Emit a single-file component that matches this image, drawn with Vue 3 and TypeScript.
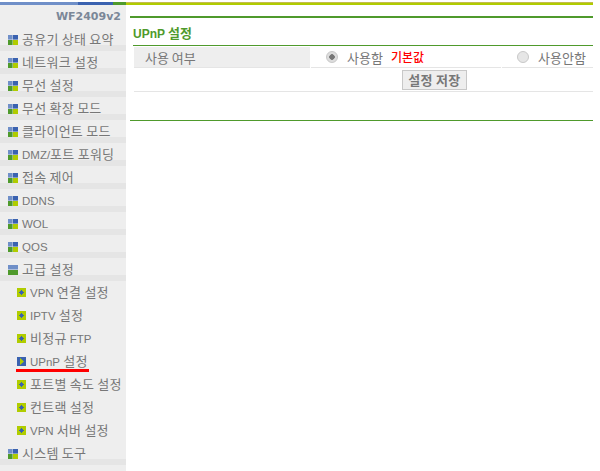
<script setup lang="ts">
interface MenuItem {
  label: string
  kind: 'top' | 'open' | 'sub' | 'active'
}

interface TextRun {
  text: string
  latin: boolean
}

const menu: MenuItem[] = [
  { label: '공유기 상태 요약', kind: 'top' },
  { label: '네트워크 설정', kind: 'top' },
  { label: '무선 설정', kind: 'top' },
  { label: '무선 확장 모드', kind: 'top' },
  { label: '클라이언트 모드', kind: 'top' },
  { label: 'DMZ/포트 포워딩', kind: 'top' },
  { label: '접속 제어', kind: 'top' },
  { label: 'DDNS', kind: 'top' },
  { label: 'WOL', kind: 'top' },
  { label: 'QOS', kind: 'top' },
  { label: '고급 설정', kind: 'open' },
  { label: 'VPN 연결 설정', kind: 'sub' },
  { label: 'IPTV 설정', kind: 'sub' },
  { label: '비정규 FTP', kind: 'sub' },
  { label: 'UPnP 설정', kind: 'active' },
  { label: '포트별 속도 설정', kind: 'sub' },
  { label: '컨트랙 설정', kind: 'sub' },
  { label: 'VPN 서버 설정', kind: 'sub' },
  { label: '시스템 도구', kind: 'top' }
]

function runs(label: string): TextRun[] {
  return label
    .split(/([A-Za-z0-9/]+)/)
    .filter((text) => text.length > 0)
    .map((text) => ({ text, latin: /^[A-Za-z0-9/]+$/.test(text) }))
}
</script>

<template>
  <div class="page">
    <div class="topbar">
      <span class="seg seg-a"></span>
      <span class="seg seg-b"></span>
      <span class="seg seg-c"></span>
      <span class="seg seg-d"></span>
    </div>
    <div class="body">
      <aside class="sidebar">
        <div class="model">WF2409v2</div>
        <ul class="menu">
          <li
            v-for="item in menu"
            :key="item.label"
            class="row"
            :class="item.kind"
          >
            <svg v-if="item.kind === 'top'" class="icon" width="10" height="10" viewBox="0 0 10 10">
              <rect x="0" y="0" width="4.6" height="4.6" fill="#6f8fc8" />
              <rect x="5" y="0" width="5" height="4.6" fill="#3a62b0" />
              <rect x="0" y="5" width="4.6" height="5" fill="#4f9a2c" />
              <rect x="5" y="5" width="5" height="5" fill="#b0cc00" />
            </svg>
            <svg v-else-if="item.kind === 'open'" class="icon" width="10" height="10" viewBox="0 0 10 10">
              <rect x="0" y="0" width="10" height="4.5" fill="#6f8fc8" />
              <rect x="0" y="5" width="10" height="5" fill="#4f9a2c" />
            </svg>
            <svg v-else-if="item.kind === 'sub'" class="icon" width="9" height="9" viewBox="0 0 9 9">
              <rect width="9" height="9" fill="#b0cc00" />
              <path d="M4 2H5V3H6V4H7V5H6V6H5V7H4V6H3V5H2V4H3V3H4Z" fill="#3a62b0" />
            </svg>
            <svg v-else class="icon" width="9" height="9" viewBox="0 0 9 9">
              <rect width="9" height="9" fill="#3a62b0" />
              <path d="M3 1L7 4.5L3 8Z" fill="#b0cc00" />
            </svg>
            <span class="label">
              <span
                v-for="(run, i) in runs(item.label)"
                :key="i"
                :class="{ latin: run.latin }"
              >{{ run.text }}</span>
            </span>
            <span v-if="item.kind === 'active'" class="underline"></span>
          </li>
        </ul>
      </aside>

      <main class="main">
        <h1 class="title"><span class="title-latin">UPnP</span> 설정</h1>
        <div class="form">
          <div class="form-row">
            <div class="cell-label">사용 여부</div>
            <div class="cell-on">
              <span class="radio checked"></span>
              <span class="opt">사용함</span>
              <span class="default">기본값</span>
            </div>
            <div class="cell-off">
              <span class="radio"></span>
              <span class="opt">사용안함</span>
            </div>
          </div>
          <div class="form-actions">
            <button class="save" type="button">설정 저장</button>
          </div>
        </div>
      </main>
    </div>
  </div>
</template>

<style>
html,
body {
  margin: 0;
  background: #ffffff;
}
</style>

<style scoped>
.page {
  width: 600px;
  height: 471px;
  overflow: hidden;
  background: #ffffff;
  font-family: "Noto Sans CJK KR", "DejaVu Sans", sans-serif;
  font-size: 13px;
  color: #777777;
}

.topbar {
  display: flex;
  width: 593px;
  height: 3px;
  padding-top: 2px;
}

.seg {
  display: block;
  height: 3px;
}
.seg-a { width: 78px; background: #6f8fc8; }
.seg-b { width: 35px; background: #3a62b0; }
.seg-c { width: 13px; background: #4f9a2c; }
.seg-d { flex: 1; background: linear-gradient(#c4bb50 1px, #b0cc00 1px); }

.body {
  display: flex;
  width: 593px;
  height: 466px;
}

.sidebar {
  width: 126px;
  flex: none;
  background: #eeeeee;
}

.model {
  height: 23px;
  padding-right: 5px;
  text-align: right;
  font: bold 11px/23px "DejaVu Sans", sans-serif;
  color: #7b8798;
}

.menu {
  margin: 0;
  padding: 0;
  list-style: none;
}

.row {
  position: relative;
  display: flex;
  align-items: center;
  height: 23px;
  box-sizing: border-box;
  padding-left: 8px;
  white-space: nowrap;
}

.row.top,
.row.open {
  padding-bottom: 3px;
  background: linear-gradient(#eeeeee 17px, #e5e5e5 17px);
}

.row.sub,
.row.active {
  padding-left: 17px;
}

.icon {
  flex: none;
  display: block;
}

.top .icon,
.open .icon {
  margin-top: 4px;
}

.label {
  margin-left: 4px;
  letter-spacing: 0.25px;
}

.sub .label,
.active .label {
  margin-left: 4px;
  margin-top: -3px;
}

.latin {
  font-family: "Liberation Sans", sans-serif;
  font-size: 11.5px;
  letter-spacing: 0;
}

.title-latin {
  font-family: "Liberation Sans", sans-serif;
  font-size: 12px;
}

.underline {
  position: absolute;
  left: 16px;
  top: 19px;
  width: 73px;
  height: 3px;
  background: #ff0000;
}

.main {
  flex: 1;
  margin: 11px 0 0 4px;
  height: 102px;
  border-top: 2px solid #4f9a2c;
  border-bottom: 1px solid #4f9a2c;
}

.title {
  margin: 0 0 0 3px;
  box-sizing: border-box;
  height: 28px;
  padding-top: 3px;
  border-bottom: 1px solid #4f9a2c;
  font-size: 13px;
  font-weight: bold;
  line-height: 24px;
  color: #4f9a2c;
}

.form {
  margin: 1px 0 0 4px;
}

.form-row {
  display: flex;
  height: 21px;
}

.cell-label,
.cell-on,
.cell-off {
  display: flex;
  align-items: center;
  box-sizing: border-box;
  height: 21px;
  border-bottom: 1px solid #e5e5e5;
}

.cell-label {
  width: 176px;
  padding-left: 11px;
  background: #eeeeee;
}

.cell-on {
  width: 190px;
  margin-left: 1px;
  padding-left: 15px;
}

.cell-off {
  flex: 1;
  margin-left: 1px;
  padding-left: 15px;
}

.radio {
  flex: none;
  box-sizing: border-box;
  width: 12px;
  height: 12px;
  border: 1px solid #c8c8c8;
  border-radius: 50%;
  background: #e6e6e6;
}

.radio.checked {
  background: radial-gradient(circle, #777777 0 2.5px, #dddddd 3px);
}

.opt {
  margin-left: 9px;
}

.default {
  margin-left: 8px;
  margin-top: -2px;
  color: #ff0000;
  font-size: 12px;
  font-weight: 500;
}

.form-actions {
  display: flex;
  align-items: center;
  height: 23px;
  padding-left: 268px;
  border-bottom: 1px solid #e5e5e5;
}

.save {
  width: 65px;
  height: 20px;
  padding: 0;
  border: 1px solid #c8c8c8;
  background: #eeeeee;
  font-family: "Noto Sans CJK KR", sans-serif;
  font-size: 13px;
  font-weight: bold;
  line-height: 18px;
  letter-spacing: 0.3px;
  color: #777777;
}
</style>
